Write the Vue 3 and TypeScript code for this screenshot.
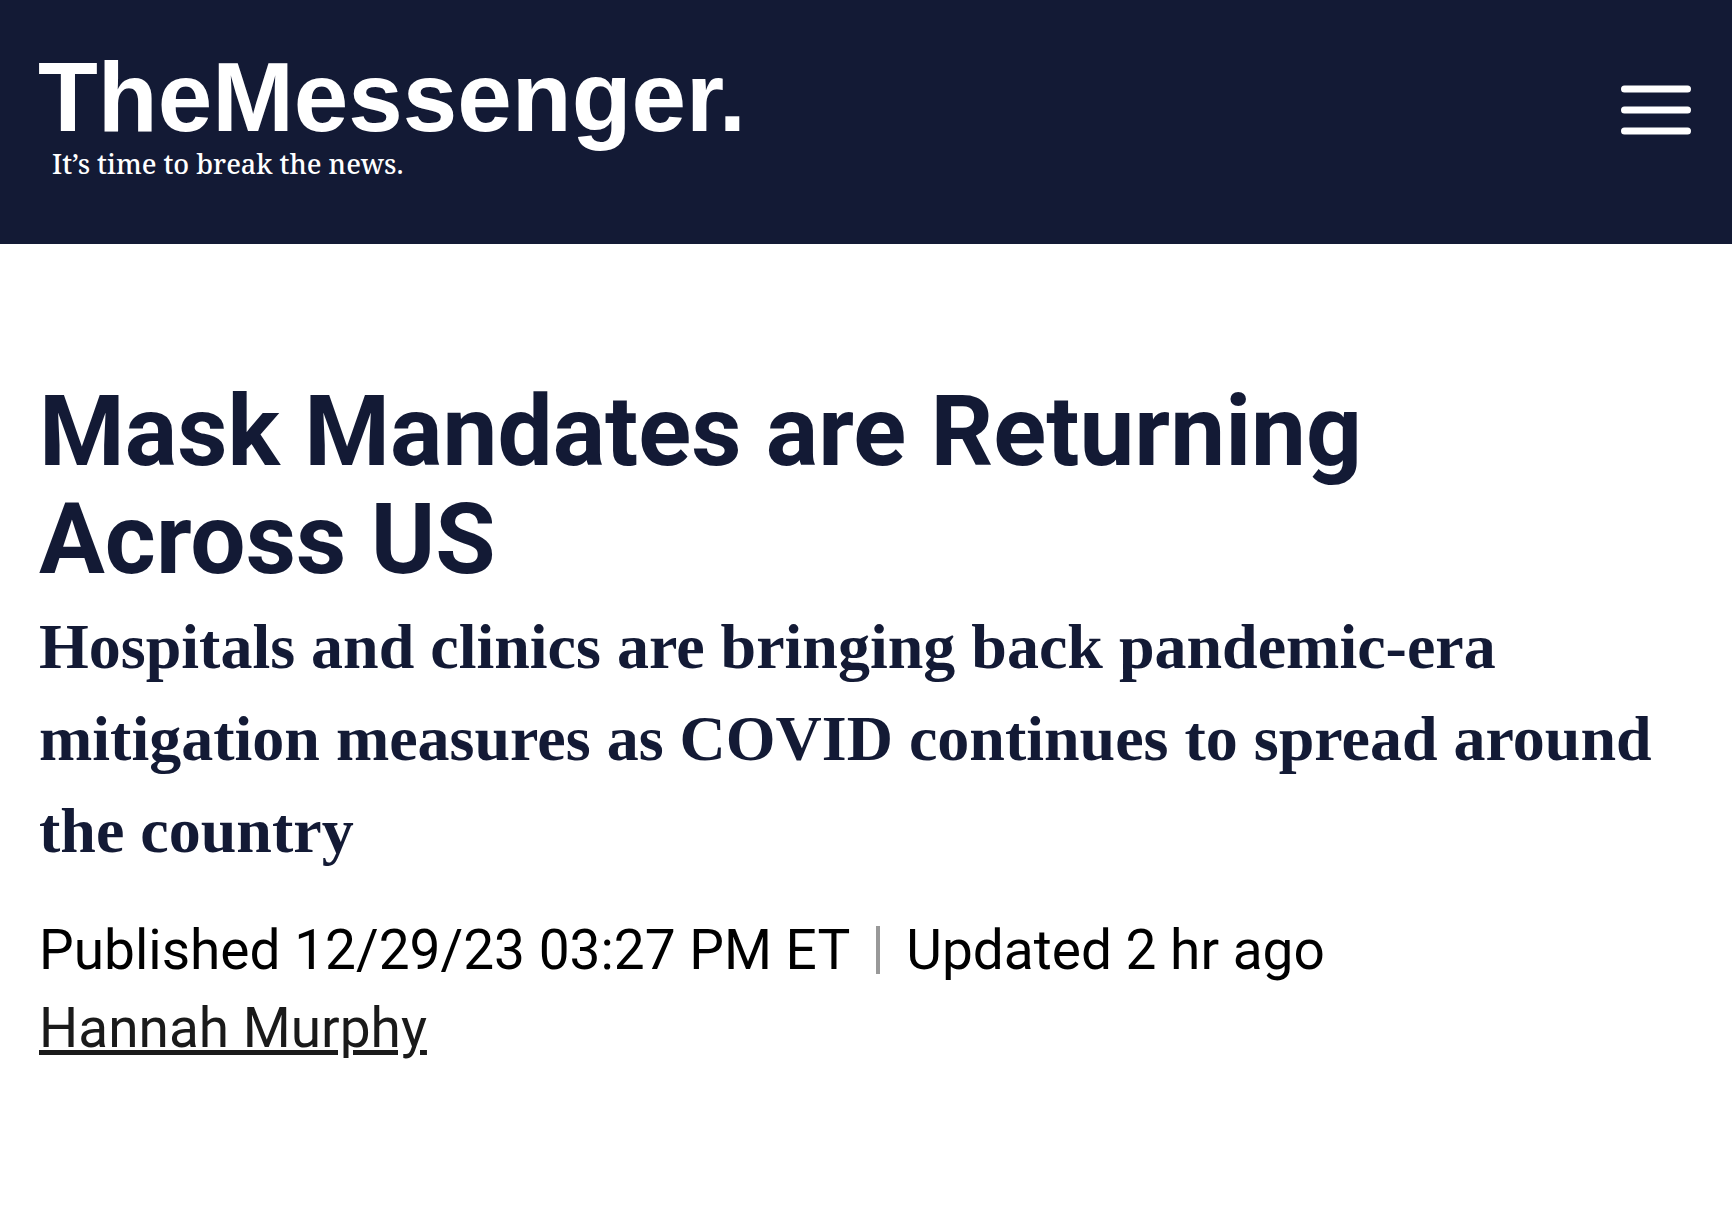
<script setup lang="ts">
import { ref } from 'vue'

const menuOpen = ref(false)
</script>

<template>
  <div class="page">
    <header class="bar">
      <a class="brand" href="#">
        <span class="name">TheMessenger.</span>
        <span class="motto">It’s time to break the news.</span>
      </a>
      <button class="menu" type="button" aria-label="Menu" :aria-expanded="menuOpen" @click="menuOpen = !menuOpen">
        <svg width="70" height="50" viewBox="0 0 70 50" fill="none" stroke="#fff" stroke-width="7" stroke-linecap="round">
          <path d="M3.5 4H66.5M3.5 25H66.5M3.5 46H66.5" />
        </svg>
      </button>
    </header>
    <main class="article">
      <h1>Mask Mandates are Returning Across US</h1>
      <h2>Hospitals and clinics are bringing back pandemic-era mitigation measures as COVID continues to spread around the country</h2>
      <p class="dates">
        <span>Published 12/29/23 03:27 PM ET</span>
        <span class="rule"></span>
        <span>Updated 2 hr ago</span>
      </p>
      <a class="author" href="#">Hannah Murphy</a>
    </main>
  </div>
</template>

<style>
body {
  background: #fff;
}
</style>

<style scoped>
.page {
  color: #131a35;
}
.bar {
  display: flex;
  justify-content: space-between;
  align-items: flex-start;
  padding: 44px 41px 66px 38px;
  background: #131a35;
}
.brand {
  display: flex;
  flex-direction: column;
  color: #fff;
  text-decoration: none;
}
.name {
  font: 700 98px/106px "Liberation Sans", Arial, sans-serif;
}
.motto {
  padding-left: 14px;
  font: 500 27px/28px "Noto Serif", "Liberation Serif", serif;
}
.menu {
  margin-top: 41px;
  padding: 0;
  border: 0;
  background: none;
  cursor: pointer;
}
.menu svg {
  display: block;
}
.article {
  padding: 134px 39px 120px;
}
h1 {
  margin: 0;
  font: 700 98px/108px Roboto, "Liberation Sans", sans-serif;
}
h2 {
  margin: 7px 0 0;
  font: 700 64px/92px "Liberation Serif", "Times New Roman", serif;
}
.dates {
  display: flex;
  align-items: center;
  gap: 26px;
  margin: 34px 0 0;
  color: #000;
  font: 400 55px/78px Roboto, "Liberation Sans", sans-serif;
}
.rule {
  width: 4px;
  height: 48px;
  background: #999;
}
.author {
  color: #1a1a1a;
  font: 400 55px/78px Roboto, "Liberation Sans", sans-serif;
  text-decoration-thickness: 5px;
}
</style>
